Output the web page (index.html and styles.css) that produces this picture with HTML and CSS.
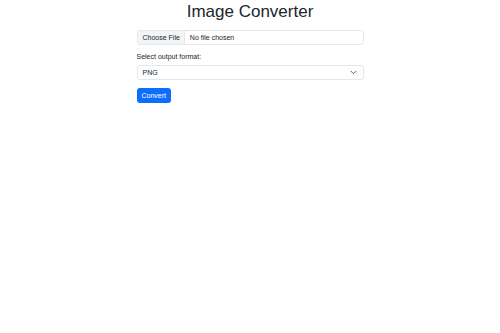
FILE: index.html
```html
<!DOCTYPE html>
<html lang="en">
<head>
  <meta charset="UTF-8">
  <title>Image Converter</title>
  <link rel="stylesheet" href="styles.css">
</head>
<body>
  <div class="container">
    <h1>Image Converter</h1>
    <form id="convertForm">
      <div class="file-input">
        <span class="file-btn">Choose File</span>
        <span class="file-name">No file chosen</span>
      </div>
      <label class="form-label">Select output format:</label>
      <div class="select">
        <span>PNG</span>
        <svg width="7" height="5" viewBox="0 0 16 12"><path d="M2 3l6 6 6-6" fill="none" stroke="#343a40" stroke-width="2" stroke-linecap="round" stroke-linejoin="round"/></svg>
      </div>
      <button type="submit">Convert</button>
    </form>
  </div>
</body>
</html>
```

FILE: styles.css
```css
body {
  margin: 0;
  font-family: 'Liberation Sans', Arial, sans-serif;
  color: #212529;
  background: #fff;
}
.container {
  width: 227px;
  margin: 0 auto;
}
h1 {
  margin: 0;
  padding-top: 1px;
  text-align: center;
  font-size: 17px;
  font-weight: 400;
  line-height: 22px;
}
form {
  margin-top: 7px;
}
.file-input {
  display: flex;
  height: 15px;
  border: 1px solid #e5e8eb;
  border-radius: 3px;
  box-sizing: border-box;
  font-size: 7px;
  line-height: 13px;
  overflow: hidden;
}
.file-btn {
  background: #f3f4f6;
  padding: 0 4px 0 5px;
  border-right: 1px solid #e5e8eb;
}
.file-name {
  padding: 0 5px;
}
.form-label {
  display: block;
  margin-top: 8px;
  font-size: 7px;
  line-height: 8px;
}
.select {
  display: flex;
  justify-content: space-between;
  align-items: center;
  margin-top: 4px;
  height: 15px;
  padding: 0 6px 0 5px;
  border: 1px solid #e5e8eb;
  border-radius: 3px;
  box-sizing: border-box;
  font-size: 7px;
}
button {
  display: block;
  margin-top: 8px;
  height: 15px;
  padding: 0 5px;
  background: #0d6efd;
  color: #fff;
  border: none;
  border-radius: 3px;
  font-family: inherit;
  font-size: 7px;
  cursor: pointer;
}
```
